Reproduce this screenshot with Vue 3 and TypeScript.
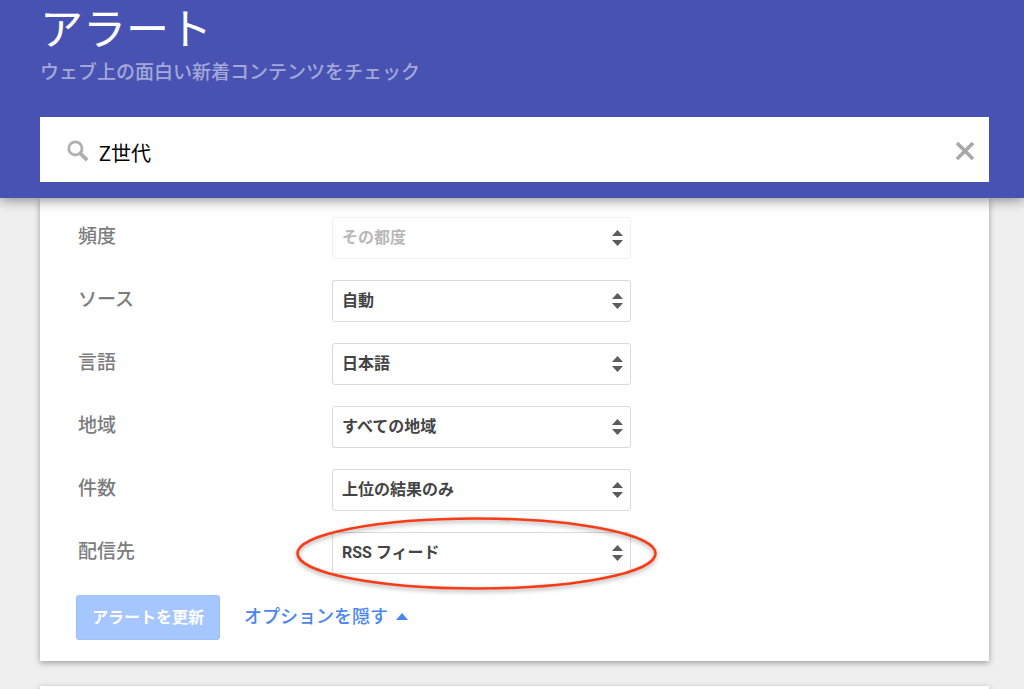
<script setup lang="ts">
import { ref } from 'vue'

interface Option {
  id: string
  label: string
  value: string
  disabled?: boolean
  marked?: boolean
}

const query = ref('Z世代')

const options = ref<Option[]>([
  { id: 'frequency', label: '頻度', value: 'その都度', disabled: true },
  { id: 'source', label: 'ソース', value: '自動' },
  { id: 'language', label: '言語', value: '日本語' },
  { id: 'region', label: '地域', value: 'すべての地域' },
  { id: 'count', label: '件数', value: '上位の結果のみ' },
  { id: 'delivery', label: '配信先', value: 'RSS フィード', marked: true },
])
</script>

<template>
  <div class="page">
    <header class="header">
      <h1 class="title">アラート</h1>
      <p class="subtitle">ウェブ上の面白い新着コンテンツをチェック</p>
      <div class="search">
        <svg class="search-icon" viewBox="0 0 22 22" aria-hidden="true">
          <circle cx="8.4" cy="8.4" r="6.6" fill="none" stroke="#b0b0b0" stroke-width="2.8" />
          <path d="M12.8 12.8L20.2 20.2" stroke="#b0b0b0" stroke-width="3.8" />
        </svg>
        <input v-model="query" class="search-input" type="text" aria-label="アラートを作成" />
        <button class="clear" type="button" aria-label="クリア" @click="query = ''">
          <svg viewBox="0 0 20 20" aria-hidden="true">
            <path d="M2 2L18 18M18 2L2 18" stroke="#a8a8a8" stroke-width="3.6" />
          </svg>
        </button>
      </div>
    </header>

    <main class="content">
      <form class="card" @submit.prevent>
        <div v-for="o in options" :key="o.id" class="row">
          <label class="label" :for="o.id">{{ o.label }}</label>
          <div class="field">
            <select :id="o.id" v-model="o.value" class="select" :disabled="o.disabled">
              <option>{{ o.value }}</option>
            </select>
            <svg class="arrows" viewBox="0 0 12 18" aria-hidden="true">
              <path d="M6.5 1L12 7H1ZM6.5 17L12 11H1Z" fill="#5c5c5c" />
            </svg>
            <svg v-if="o.marked" class="mark" viewBox="0 0 361 73" preserveAspectRatio="none" aria-hidden="true">
              <ellipse cx="180.5" cy="36.5" rx="179" ry="35" fill="none" stroke="#f93c17" stroke-width="2.6" />
            </svg>
          </div>
        </div>
        <div class="actions">
          <button class="update" type="submit" disabled>アラートを更新</button>
          <a class="toggle" href="#">
            オプションを隠す
            <svg class="caret" viewBox="0 0 12 7" aria-hidden="true">
              <path d="M6 0L12 7H0Z" fill="#4a86ee" />
            </svg>
          </a>
        </div>
      </form>
      <section class="card next"></section>
    </main>
  </div>
</template>

<style>
body {
  background: #efefef;
}
</style>

<style scoped>
.page {
  height: 100vh;
  overflow: hidden;
  background: #efefef;
  font-family: Roboto, "Noto Sans CJK JP", sans-serif;
}
.header {
  position: relative;
  z-index: 1;
  padding: 0 35px 16px 40px;
  background: #4852b3;
  box-shadow: 0 2px 12px rgba(0, 0, 0, 0.45);
}
.title {
  margin: 0;
  color: #fff;
  font-size: 43px;
  font-weight: 400;
  line-height: 60px;
}
.subtitle {
  margin: 0 0 31px;
  color: #a3a8d9;
  font-size: 19px;
  font-weight: 500;
  line-height: 26px;
}
.search {
  display: flex;
  align-items: center;
  height: 65px;
  padding: 2px 14px 0 27px;
  box-sizing: border-box;
  background: #fff;
}
.search-icon {
  flex: none;
  width: 22px;
  height: 22px;
}
.search-input {
  flex: 1;
  min-width: 0;
  height: 40px;
  padding: 4px 0 0;
  margin-left: 10px;
  box-sizing: border-box;
  border: 0;
  outline: 0;
  background: none;
  color: #000;
  font: 20px Roboto, "Noto Sans CJK JP", sans-serif;
}
.clear {
  display: flex;
  padding: 0;
  border: 0;
  background: none;
  cursor: pointer;
}
.clear svg {
  width: 20px;
  height: 20px;
}
.content {
  padding: 0 35px 0 40px;
}
.card {
  background: #fff;
  box-shadow: 0 2px 6px rgba(0, 0, 0, 0.35);
}
form.card {
  display: flex;
  flex-direction: column;
  gap: 21px;
  padding: 19px 36px 21px;
}
.next {
  height: 60px;
  margin-top: 25px;
}
.row {
  display: flex;
  padding-left: 2px;
}
.label {
  flex: none;
  width: 254px;
  color: #7c7c7c;
  font-size: 19px;
  font-weight: 500;
  line-height: 40px;
}
.field {
  position: relative;
  width: 299px;
}
.select {
  display: block;
  width: 100%;
  height: 42px;
  padding: 0 32px 2px 9px;
  box-sizing: border-box;
  appearance: none;
  border: 1px solid #d9d9d9;
  border-radius: 3px;
  background: #fff;
  color: #444;
  font: bold 16px Roboto, "Noto Sans CJK JP", sans-serif;
}
.select:disabled {
  border-color: #f0f0f0;
  color: #b8b8b8;
  opacity: 1;
}
.arrows {
  position: absolute;
  top: 12px;
  right: 8px;
  width: 12px;
  height: 18px;
  pointer-events: none;
}
.mark {
  position: absolute;
  top: -15px;
  left: -36px;
  width: 361px;
  height: 73px;
  pointer-events: none;
  filter: drop-shadow(0 2px 2px rgba(0, 0, 0, 0.35));
}
.actions {
  display: flex;
  align-items: center;
  gap: 24px;
}
.update {
  height: 45px;
  padding: 0 15px 3px;
  border: 1px solid #9dbff8;
  border-radius: 3px;
  background: #a6c6ff;
  color: #fff;
  font: bold 16px Roboto, "Noto Sans CJK JP", sans-serif;
}
.toggle {
  display: flex;
  align-items: center;
  gap: 8px;
  padding-bottom: 2px;
  color: #4a86ee;
  font-size: 18px;
  font-weight: 500;
  line-height: 24px;
  text-decoration: none;
}
.caret {
  width: 12px;
  height: 7px;
}
</style>
